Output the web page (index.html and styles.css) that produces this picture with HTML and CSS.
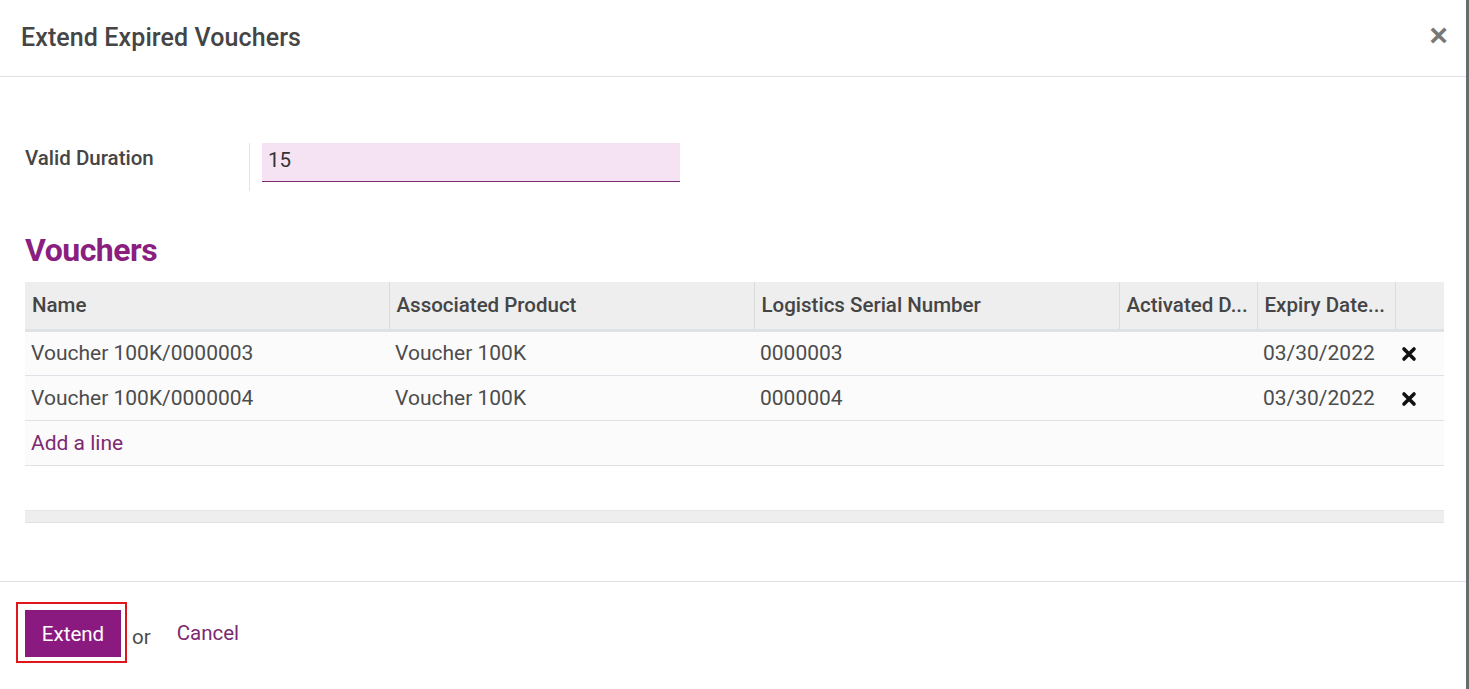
FILE: index.html
```html
<!DOCTYPE html>
<html lang="en">
  <head>
    <meta charset="UTF-8" />
    <title>Extend Expired Vouchers</title>
    <link rel="stylesheet" href="styles.css">
  </head>
  <body>
    <div class="modal">
      <div class="modal-header">
        <h4 class="modal-title">Extend Expired Vouchers</h4>
        <button class="close">&times;</button>
      </div>
      <div class="modal-body">
        <div class="field">
          <label class="field-label">Valid Duration</label>
          <div class="field-sep"></div>
          <div class="field-input">15</div>
        </div>
        <h2 class="section-title">Vouchers</h2>
        <table class="list">
          <thead>
            <tr>
              <th class="c-name">Name</th>
              <th class="c-prod">Associated Product</th>
              <th class="c-serial">Logistics Serial Number</th>
              <th class="c-act">Activated D...</th>
              <th class="c-exp">Expiry Date...</th>
              <th class="c-del"></th>
            </tr>
          </thead>
          <tbody>
            <tr>
              <td>Voucher 100K/0000003</td>
              <td>Voucher 100K</td>
              <td>0000003</td>
              <td></td>
              <td>03/30/2022</td>
              <td class="del">
                <svg width="16" height="16" viewBox="0 0 16 16"><path d="M3 3L13 13M13 3L3 13" stroke="#111" stroke-width="3.6" stroke-linecap="round"/></svg>
              </td>
            </tr>
            <tr>
              <td>Voucher 100K/0000004</td>
              <td>Voucher 100K</td>
              <td>0000004</td>
              <td></td>
              <td>03/30/2022</td>
              <td class="del">
                <svg width="16" height="16" viewBox="0 0 16 16"><path d="M3 3L13 13M13 3L3 13" stroke="#111" stroke-width="3.6" stroke-linecap="round"/></svg>
              </td>
            </tr>
            <tr class="add-row">
              <td colspan="6"><a href="#">Add a line</a></td>
            </tr>
            <tr class="empty-row">
              <td colspan="6"></td>
            </tr>
          </tbody>
          <tfoot>
            <tr><td colspan="6"></td></tr>
          </tfoot>
        </table>
      </div>
      <div class="modal-footer">
        <span class="btn-wrap"><button class="btn-primary">Extend</button></span>
        <span class="or">or</span>
        <a href="#" class="cancel">Cancel</a>
      </div>
    </div>
  </body>
</html>
```

FILE: styles.css
```css
* {
  box-sizing: border-box;
}

body {
  margin: 0;
  font-family: Roboto, "Liberation Sans", sans-serif;
  color: #4c4c4c;
  background: #fff;
}

.modal {
  width: 1469px;
  height: 689px;
  border-right: 3px solid #6b6b6b;
  display: flex;
  flex-direction: column;
}

.modal-header {
  height: 77px;
  border-bottom: 1px solid #dee2e6;
  display: flex;
  align-items: center;
  justify-content: space-between;
  padding: 0 18px 2px 21px;
}

.modal-title {
  margin: 0;
  font-size: 25px;
  font-weight: 500;
  color: #454545;
  letter-spacing: 0.1px;
}

.close {
  background: none;
  border: none;
  font-size: 32px;
  font-weight: 700;
  color: #777;
  padding: 0;
  line-height: 1;
  margin-top: -4px;
  cursor: pointer;
}

.modal-body {
  flex: 1;
  padding: 66px 22px 0 25px;
}

.field {
  display: flex;
  align-items: stretch;
  height: 48px;
}

.field-label {
  width: 224px;
  font-size: 20.5px;
  font-weight: 500;
  color: #454545;
  padding-top: 3px;
}

.field-sep {
  width: 1px;
  background: #e4e4e4;
  margin-right: 12px;
}

.field-input {
  width: 418px;
  height: 39px;
  background: #f5e3f3;
  border-bottom: 1px solid #7c2a72;
  font-size: 20.5px;
  color: #333;
  padding: 5px 6px 0 6px;
}

.section-title {
  margin: 40px 0 13px 0;
  font-size: 32px;
  font-weight: 700;
  color: #8b1f7f;
  letter-spacing: -0.5px;
}

.list {
  width: 100%;
  border-collapse: collapse;
  table-layout: fixed;
  font-size: 20.5px;
}

.list th {
  background: #eeeeee;
  height: 48px;
  text-align: left;
  font-weight: 500;
  color: #454545;
  padding: 0 7px;
  border-left: 1px solid #dcdcdc;
  border-bottom: 3px solid #dee2e6;
  white-space: nowrap;
  overflow: hidden;
}

.list th:first-child {
  border-left: none;
}

.c-name { width: 364px; }
.c-prod { width: 365px; }
.c-serial { width: 365px; }
.c-act { width: 138px; }
.c-exp { width: 138px; }
.c-del { width: 49px; }

.list td {
  height: 45px;
  padding: 0 6px;
  font-size: 21px;
  color: #4c4c4c;
  border-bottom: 1px solid #dee2e6;
  white-space: nowrap;
}

.list tbody tr {
  background: #fbfbfb;
}

.list td.del {
  text-align: left;
  padding: 4px 0 0 6px;
}

.add-row a {
  color: #7c2a72;
  text-decoration: none;
}

.list .empty-row {
  background: #fff;
}

.list .empty-row td {
  height: 45px;
  border-bottom: 1px solid #e6e6e6;
}

.list tfoot td {
  height: 12px;
  background: #eeeeee;
  padding: 0;
}

.modal-footer {
  height: 108px;
  border-top: 1px solid #dee2e6;
  display: flex;
  align-items: center;
  padding: 0 0 6px 16px;
}

.btn-wrap {
  border: 2px solid #e0161c;
  padding: 6px 4px 4px 7px;
  display: inline-flex;
}

.btn-primary {
  background: #8b1a80;
  color: #fff;
  border: none;
  font-family: inherit;
  font-size: 20.5px;
  height: 47px;
  width: 96px;
  padding: 0;
  cursor: pointer;
}

.or {
  font-size: 20.5px;
  color: #4c4c4c;
  margin: 8px 0 0 5px;
}

.cancel {
  font-size: 20.5px;
  color: #7c2a72;
  text-decoration: none;
  margin-left: 26px;
}
```
